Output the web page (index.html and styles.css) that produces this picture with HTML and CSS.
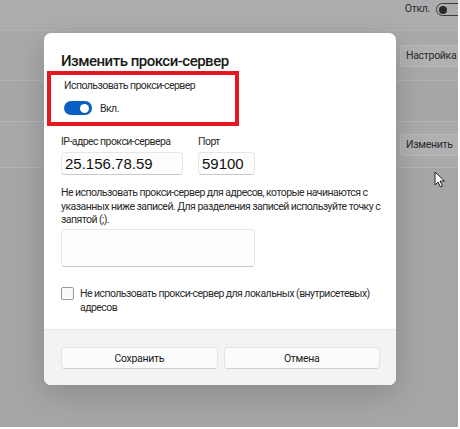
FILE: index.html
```html
<!DOCTYPE html>
<html lang="ru">
<head>
<meta charset="utf-8">
<link rel="stylesheet" href="styles.css">
</head>
<body>
<div class="screen">
  <div class="settings">
    <div class="row row-top">
      <span class="state">Откл.</span>
      <span class="mini-toggle"><span class="mini-knob"></span></span>
    </div>
    <div class="row row-a"><span class="bg-btn">Настройка</span></div>
    <div class="row row-b"></div>
    <div class="row row-c"><span class="bg-btn">Изменить</span></div>
    <div class="row row-d"></div>
  </div>

  <svg class="cursor" width="12" height="18" viewBox="0 0 12 18">
    <path d="M1 1 L1 14 L4 11 L6.5 16 L8.5 15 L6 10 L10.5 10 Z" fill="#fff" stroke="#222" stroke-width="1"/>
  </svg>

  <div class="dialog">
    <div class="content">
      <h1 class="title">Изменить прокси-сервер</h1>
      <div class="highlight">
        <div class="label">Использовать прокси-сервер</div>
        <div class="toggle-row">
          <span class="toggle"><span class="knob"></span></span>
          <span class="toggle-text">Вкл.</span>
        </div>
      </div>
      <div class="fields">
        <div class="field">
          <div class="label">IP-адрес прокси-сервера</div>
          <div class="input ip">25.156.78.59</div>
        </div>
        <div class="field">
          <div class="label">Порт</div>
          <div class="input port">59100</div>
        </div>
      </div>
      <p class="desc">Не использовать прокси-сервер для адресов, которые начинаются с<br>указанных ниже записей. Для разделения записей используйте точку с<br>запятой (;).</p>
      <div class="input area"></div>
      <div class="check-row">
        <span class="checkbox"></span>
        <span class="check-text">Не использовать прокси-сервер для локальных (внутрисетевых)<br>адресов</span>
      </div>
    </div>
    <div class="footer">
      <span class="btn">Сохранить</span>
      <span class="btn">Отмена</span>
    </div>
  </div>
</div>
</body>
</html>
```

FILE: styles.css
```css
html, body {
  margin: 0;
  padding: 0;
  background: #ffffff;
}
body {
  width: 460px;
  height: 429px;
  overflow: hidden;
  font-family: "Roboto", "Noto Sans", sans-serif;
}
.screen {
  position: relative;
  width: 458px;
  height: 427px;
  background: #a6a6a9;
  overflow: hidden;
}
.settings {
  display: flex;
  flex-direction: column;
}
.row {
  display: flex;
  justify-content: flex-end;
  align-items: center;
  border-bottom: 1px solid #b3b3b6;
  box-sizing: border-box;
}
.row-top {
  height: 31px;
  background: #adadb0;
  align-items: flex-start;
  padding-top: 2px;
  gap: 6px;
}
.state {
  font-size: 10.5px;
  letter-spacing: -0.3px;
  color: #2a2a2a;
}
.mini-toggle {
  width: 30px;
  height: 13px;
  border: 1px solid #3a3a3a;
  border-radius: 8px;
  box-sizing: border-box;
  display: flex;
  align-items: center;
  padding-left: 2px;
  margin-right: -8px;
  margin-top: 1px;
}
.mini-knob {
  width: 8px;
  height: 8px;
  border-radius: 50%;
  background: #2a2a2a;
}
.row-a { height: 50px; background: #a9a9ac; }
.row-b { height: 41px; background: #a7a7aa; }
.row-c { height: 46px; background: #a9a9ac; }
.row-d { flex: 1; height: 260px; background: #a6a6a9; border-bottom: 0; }
.bg-btn {
  width: 58px;
  height: 22px;
  box-sizing: border-box;
  border: 1px solid #b9b9bc;
  border-right: 0;
  border-radius: 4px 0 0 4px;
  background: #b1b1b4;
  font-size: 10.5px;
  letter-spacing: -0.3px;
  color: #2a2a2a;
  display: flex;
  align-items: center;
  padding-left: 5px;
  white-space: nowrap;
}
.cursor {
  position: absolute;
  left: 434px;
  top: 171px;
}
.dialog {
  position: absolute;
  left: 44px;
  top: 33px;
  width: 352px;
  height: 352px;
  background: #ffffff;
  border-radius: 7px;
  overflow: hidden;
  display: flex;
  flex-direction: column;
  box-shadow: 0 8px 30px rgba(0, 0, 0, 0.18);
}
.content {
  flex: 1;
  padding: 17px 17px 0 17px;
  color: #1b1b1b;
}
.title {
  margin: 0;
  font-size: 15px;
  font-weight: 500;
  letter-spacing: -0.5px;
  line-height: 22px;
  color: #1a1a1a;
}
.highlight {
  margin: -1px 0 0 -14px;
  width: 192px;
  height: 55px;
  border: 4px solid #e8161f;
  box-sizing: border-box;
  padding: 4px 0 0 13px;
}
.label, .toggle-text, .desc, .check-text, .btn {
  font-size: 10.5px;
  letter-spacing: -0.55px;
  color: #2b2b2b;
}
.label {
  line-height: 14px;
}
.toggle-row {
  display: flex;
  align-items: center;
  gap: 8px;
  margin-top: 8px;
}
.toggle {
  width: 28px;
  height: 14px;
  border-radius: 7px;
  background: #0a5fc4;
  display: flex;
  align-items: center;
  justify-content: flex-end;
  padding-right: 3px;
  box-sizing: border-box;
}
.knob {
  width: 9px;
  height: 9px;
  border-radius: 50%;
  background: #ffffff;
}
.fields {
  display: flex;
  gap: 15px;
  margin-top: 9px;
}
.field .label {
  margin-bottom: 3px;
}
.input {
  box-sizing: border-box;
  height: 23px;
  border: 1px solid #e6e6e6;
  border-bottom-color: #c8c8c8;
  border-radius: 4px;
  background: #fdfdfd;
  font-family: "Liberation Sans", Arial, sans-serif;
  font-size: 15px;
  line-height: 21px;
  padding-left: 3px;
  color: #111;
}
.ip { width: 122px; }
.port { width: 57px; }
.desc {
  margin: 11px 0 0 0;
  line-height: 13.5px;
  white-space: nowrap;
}
.area {
  width: 194px;
  height: 38px;
  margin-top: 2px;
}
.check-row {
  display: flex;
  gap: 6px;
  margin-top: 20px;
  align-items: flex-start;
}
.checkbox {
  flex: none;
  width: 13px;
  height: 13px;
  border: 1px solid #9a9a9a;
  border-radius: 2px;
  box-sizing: border-box;
  background: #fafafa;
}
.check-text {
  line-height: 14px;
  white-space: nowrap;
}
.footer {
  height: 56px;
  background: #f3f3f3;
  border-top: 1px solid #e8e8e8;
  box-sizing: border-box;
  display: flex;
  gap: 6px;
  padding: 17px 16px 0 17px;
}
.btn {
  flex: 1;
  height: 22px;
  box-sizing: border-box;
  border: 1px solid #e4e4e4;
  border-bottom-color: #d0d0d0;
  border-radius: 4px;
  background: #fbfbfb;
  color: #1b1b1b;
  display: flex;
  align-items: center;
  justify-content: center;
  letter-spacing: -0.3px;
}
```
